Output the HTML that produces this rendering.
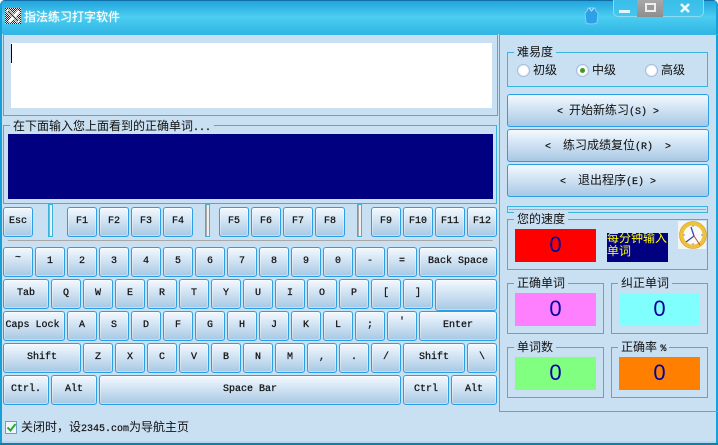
<!DOCTYPE html>
<html><head><meta charset="utf-8"><style>
*{box-sizing:border-box}
html,body{margin:0;padding:0;width:718px;height:445px;overflow:hidden;background:#fff}
#w{position:relative;width:718px;height:445px;background:#c9dff2;font-family:"Liberation Sans","Noto Sans CJK SC",sans-serif;font-size:12px;color:#111;overflow:hidden;border-radius:5px 5px 0 0}
#w div{position:absolute}
.k{border:1px solid #2a9fe8;border-radius:3px;background:linear-gradient(#f4f9fe,#d8e8f6 35%,#a8c8e4);box-shadow:inset 0 0 0 1px rgba(255,255,255,.35);font:normal 10px/28px "Liberation Mono",monospace;-webkit-text-stroke:.25px #111;text-align:center;color:#111;height:30px;width:30px;white-space:pre}
.b{border:1px solid #2a9fe8;border-radius:3px;background:linear-gradient(#f4f9fe,#d8e8f6 35%,#a8c8e4);left:507px;width:202px;text-align:center;line-height:31px;font-size:12px;white-space:pre}
.m{font:10px "Liberation Mono",monospace;-webkit-text-stroke:.2px #111}
.f{border:1px solid #38b4e0}
.l{background:#c9dff2;padding:0 3px;line-height:14px;white-space:pre;height:14px}
.n{text-align:center;color:#0000a0;font:22px/31px "Liberation Sans",sans-serif;height:33px;width:81px}
.r{width:13px;height:13px;border-radius:50%;background:radial-gradient(#fff 55%,#9db4dc);border:1px solid #a8bce0}
.t{white-space:pre;line-height:14px}
.s{width:5px;height:33px;border:1px solid #38b4e0;background:linear-gradient(90deg,#c9dff2 0,#a8a8a8 0,#a8a8a8 1px,#f0f0f0 1px)}
</style></head><body><div id="w">
<div style="left:0;top:0;width:718px;height:34px;background:linear-gradient(#1fa3dc,#4ccdf0 50%,#2fb6e6)"></div>
<div style="left:0;top:0;width:718px;height:1px;background:#0f6fa6"></div>
<div style="left:0;top:0;width:2px;height:445px;background:#17a0d8"></div>
<div style="left:716px;top:0;width:2px;height:445px;background:#17a0d8"></div>
<div style="left:0;top:443px;width:718px;height:2px;background:#0f7ea8"></div>
<div style="left:2px;top:441px;width:714px;height:2px;background:#b6d8ee"></div>

<svg style="position:absolute;left:5px;top:8px" width="16" height="16" viewBox="0 0 16 16"><defs><pattern id="c" width="2" height="2" patternUnits="userSpaceOnUse"><rect width="2" height="2" fill="#e8e8e8"/><rect width="1" height="1" fill="#222"/><rect x="1" y="1" width="1" height="1" fill="#222"/></pattern></defs><rect width="16" height="16" fill="url(#c)"/><path d="M2 2L14 14M4 14L14 3" stroke="#fff" stroke-width="3"/><path d="M3 3L13 13" stroke="#111" stroke-width="1"/></svg>
<div class="t" style="left:24px;top:10px;color:#fff;font-size:12px;text-shadow:0 0 1px #e8f8ff">指法练习打字软件</div>

<svg style="position:absolute;left:584px;top:7px" width="15" height="18" viewBox="0 0 15 18"><path d="M4 1H11L12 4L14 6L13 16Q7.500 18 2 16L1 6L3 4Z" fill="#2f9fe6" stroke="#7fd0f5"/><path d="M5 1L7.500 4L10 1" fill="none" stroke="#bfe8fa"/></svg>

<div style="left:613px;top:-2px;width:91px;height:19px;border:1px solid #8adcf4;border-radius:0 0 5px 5px;background:linear-gradient(#38bce8,#45c6ee)"></div>
<div style="left:637px;top:0;width:26px;height:17px;background:linear-gradient(#a8a8a8,#8e8e8e)"></div>
<div style="left:619px;top:10px;width:11px;height:3px;background:#dff4fb"></div>
<div style="left:645px;top:3px;width:11px;height:9px;border:2px solid #eee;background:#9a9a9a"></div>
<svg style="position:absolute;left:679px;top:3px" width="12" height="10" viewBox="0 0 12 10"><path d="M2 1L10 9M10 1L2 9" stroke="#eaf8fd" stroke-width="2.600"/></svg>

<!-- left frames -->
<div class="f" style="left:3px;top:34px;width:495px;height:82px"></div>
<div style="left:11px;top:43px;width:481px;height:65px;background:#fff"></div>
<div style="left:11px;top:44px;width:1px;height:19px;background:#000"></div>
<div class="f" style="left:3px;top:125px;width:494px;height:79px"></div>
<div class="l t" style="left:10px;top:119px;">在下面输入您上面看到的正确单词<span class="m">...</span></div>
<div style="left:8px;top:134px;width:485px;height:65px;background:#000080"></div>
<div style="left:8px;top:240px;width:485px;height:1px;background:#a8a8a8"></div>

<div class="s" style="left:48px;top:204px"></div>
<div class="s" style="left:205px;top:204px"></div>
<div class="s" style="left:357px;top:204px"></div>

<!-- function row -->
<div class="k" style="left:3px;top:207px">Esc</div>
<div class="k" style="left:67px;top:207px">F1</div>
<div class="k" style="left:99px;top:207px">F2</div>
<div class="k" style="left:131px;top:207px">F3</div>
<div class="k" style="left:163px;top:207px">F4</div>
<div class="k" style="left:219px;top:207px">F5</div>
<div class="k" style="left:251px;top:207px">F6</div>
<div class="k" style="left:283px;top:207px">F7</div>
<div class="k" style="left:315px;top:207px">F8</div>
<div class="k" style="left:371px;top:207px">F9</div>
<div class="k" style="left:403px;top:207px">F10</div>
<div class="k" style="left:435px;top:207px">F11</div>
<div class="k" style="left:467px;top:207px">F12</div>
<!-- row 1 -->
<div class="k" style="left:3px;top:247px;line-height:21px">~</div>
<div class="k" style="left:35px;top:247px">1</div>
<div class="k" style="left:67px;top:247px">2</div>
<div class="k" style="left:99px;top:247px">3</div>
<div class="k" style="left:131px;top:247px">4</div>
<div class="k" style="left:163px;top:247px">5</div>
<div class="k" style="left:195px;top:247px">6</div>
<div class="k" style="left:227px;top:247px">7</div>
<div class="k" style="left:259px;top:247px">8</div>
<div class="k" style="left:291px;top:247px">9</div>
<div class="k" style="left:323px;top:247px">0</div>
<div class="k" style="left:355px;top:247px">-</div>
<div class="k" style="left:387px;top:247px">=</div>
<div class="k" style="left:419px;top:247px;width:78px">Back Space</div>
<!-- row 2 -->
<div class="k" style="left:3px;top:279px;width:46px">Tab</div>
<div class="k" style="left:51px;top:279px">Q</div>
<div class="k" style="left:83px;top:279px">W</div>
<div class="k" style="left:115px;top:279px">E</div>
<div class="k" style="left:147px;top:279px">R</div>
<div class="k" style="left:179px;top:279px">T</div>
<div class="k" style="left:211px;top:279px">Y</div>
<div class="k" style="left:243px;top:279px">U</div>
<div class="k" style="left:275px;top:279px">I</div>
<div class="k" style="left:307px;top:279px">O</div>
<div class="k" style="left:339px;top:279px">P</div>
<div class="k" style="left:371px;top:279px">[</div>
<div class="k" style="left:403px;top:279px">]</div>
<div class="k" style="left:435px;top:279px;width:62px;height:32px"></div>
<!-- row 3 -->
<div class="k" style="left:3px;top:311px;width:62px;overflow:hidden;text-indent:-3px">Caps Lock</div>
<div class="k" style="left:67px;top:311px">A</div>
<div class="k" style="left:99px;top:311px">S</div>
<div class="k" style="left:131px;top:311px">D</div>
<div class="k" style="left:163px;top:311px">F</div>
<div class="k" style="left:195px;top:311px">G</div>
<div class="k" style="left:227px;top:311px">H</div>
<div class="k" style="left:259px;top:311px">J</div>
<div class="k" style="left:291px;top:311px">K</div>
<div class="k" style="left:323px;top:311px">L</div>
<div class="k" style="left:355px;top:311px">;</div>
<div class="k" style="left:387px;top:311px;line-height:21px">'</div>
<div class="k" style="left:419px;top:311px;width:78px">Enter</div>
<!-- row 4 -->
<div class="k" style="left:3px;top:343px;width:78px">Shift</div>
<div class="k" style="left:83px;top:343px">Z</div>
<div class="k" style="left:115px;top:343px">X</div>
<div class="k" style="left:147px;top:343px">C</div>
<div class="k" style="left:179px;top:343px">V</div>
<div class="k" style="left:211px;top:343px">B</div>
<div class="k" style="left:243px;top:343px">N</div>
<div class="k" style="left:275px;top:343px">M</div>
<div class="k" style="left:307px;top:343px">,</div>
<div class="k" style="left:339px;top:343px">.</div>
<div class="k" style="left:371px;top:343px">/</div>
<div class="k" style="left:403px;top:343px;width:62px">Shift</div>
<div class="k" style="left:467px;top:343px">\</div>
<!-- row 5 -->
<div class="k" style="left:3px;top:375px;width:46px">Ctrl.</div>
<div class="k" style="left:51px;top:375px;width:46px">Alt</div>
<div class="k" style="left:99px;top:375px;width:302px">Space Bar</div>
<div class="k" style="left:403px;top:375px;width:46px">Ctrl</div>
<div class="k" style="left:451px;top:375px;width:46px">Alt</div>

<!-- bottom checkbox -->
<div style="left:5px;top:421px;width:12px;height:13px;border:1px solid #6aa0c8;background:#eef6fc"></div>
<svg style="position:absolute;left:6px;top:422px" width="11" height="11" viewBox="0 0 11 11"><path d="M1.500 5.500L4.500 8.500L9.500 2" fill="none" stroke="#2fa82f" stroke-width="2"/></svg>
<div class="t" style="left:21px;top:420px;font-size:12px">关闭时，设<span class="m">2345.com</span>为导航主页</div>

<!-- right panel -->
<div class="f" style="left:499px;top:34px;width:219px;height:378px;border-right:0"></div>

<div class="f" style="left:507px;top:52px;width:201px;height:35px"></div>
<div class="l t" style="left:514px;top:45px">难易度</div>
<div class="r" style="left:517px;top:64px"></div>
<div class="t" style="left:533px;top:63px">初级</div>
<div class="r" style="left:576px;top:64px"></div>
<div style="left:580px;top:68px;width:5px;height:5px;border-radius:50%;background:#3c9c1c"></div>
<div class="t" style="left:592px;top:63px">中级</div>
<div class="r" style="left:645px;top:64px"></div>
<div class="t" style="left:661px;top:63px">高级</div>

<div class="b" style="top:94px;height:33px"><span class="m">&lt; </span>开始新练习<span class="m">(S) &gt;</span></div>
<div class="b" style="top:129px;height:33px"><span class="m">&lt;  </span>练习成绩复位<span class="m">(R)  &gt;</span></div>
<div class="b" style="top:164px;height:33px"><span class="m">&lt;  </span>退出程序<span class="m">(E) &gt;</span></div>

<div class="f" style="left:507px;top:206px;width:201px;height:7px"></div>
<div style="left:509px;top:209px;width:197px;height:1px;background:#a8a8a8"></div>

<div class="f" style="left:507px;top:219px;width:201px;height:51px"></div>
<div class="l t" style="left:514px;top:212px">您的速度</div>
<div class="n" style="left:515px;top:229px;background:#f00">0</div>
<div style="left:607px;top:233px;width:61px;height:29px;background:#000080;overflow:hidden"><div style="left:0;top:-1px;width:61px;color:#ff0;font-size:12px;line-height:13px">每分钟输入单词</div></div>
<div style="left:678px;top:221px;width:28px;height:28px;background:#f4f4f4"></div>
<svg style="position:absolute;left:679px;top:221px" width="28" height="28" viewBox="0 0 28 28"><circle cx="14" cy="14" r="11.500" fill="#fafafa" stroke="#eec23a" stroke-width="4"/><circle cx="14" cy="14" r="13.500" fill="none" stroke="#c99a20" stroke-width=".6"/><path d="M15 15L7 21M15 15L12 6" stroke="#3a4aa8" stroke-width="1.300"/><path d="M15 15L21 24" stroke="#b05030" stroke-width="1"/><path d="M14 4v2M14 22v2M4 14h2M22 14h2" stroke="#8a8ac0"/></svg>

<div class="f" style="left:507px;top:283px;width:97px;height:51px"></div>
<div class="l t" style="left:514px;top:276px">正确单词</div>
<div class="n" style="left:515px;top:293px;background:#ff80ff">0</div>
<div class="f" style="left:611px;top:283px;width:97px;height:51px"></div>
<div class="l t" style="left:618px;top:276px">纠正单词</div>
<div class="n" style="left:619px;top:293px;background:#80ffff">0</div>

<div class="f" style="left:507px;top:347px;width:97px;height:51px"></div>
<div class="l t" style="left:514px;top:340px">单词数</div>
<div class="n" style="left:515px;top:357px;background:#80ff80">0</div>
<div class="f" style="left:611px;top:347px;width:97px;height:51px"></div>
<div class="l t" style="left:618px;top:340px">正确率 <span class="m">%</span></div>
<div class="n" style="left:619px;top:357px;background:#ff8000">0</div>
</div></body></html>
